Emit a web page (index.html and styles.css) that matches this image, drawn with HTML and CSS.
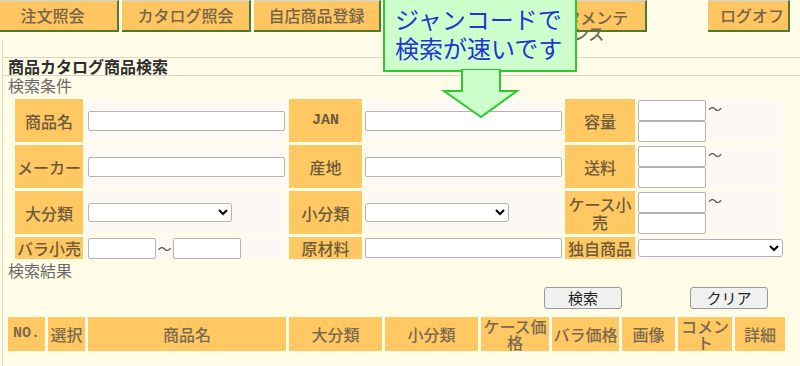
FILE: index.html
```html
<!doctype html>
<html>

<head>
    <meta charset="UTF-8">
    <title>商品カタログ商品検索</title>
    <link rel="stylesheet" href="styles.css">
</head>

<body>
<div class="nav">
    <a class="navBtn nb1">注文照会</a>
    <a class="navBtn nb2">カタログ照会</a>
    <a class="navBtn nb3">自店商品登録</a>
    <a class="navBtn nb4">データメンテナンス</a>
    <a class="navBtn nb5">ログオフ</a>
</div>

<div class="callout">ジャンコードで<br>検索が速いです</div>
<svg class="arrow" width="80" height="52" viewBox="0 0 80 52">
    <polygon points="22,0 60,0 60,22 77,22 41,48 4,22 22,22" fill="#ccffcc" stroke="#2ec92e" stroke-width="2" stroke-linejoin="miter"/>
</svg>

<div class="panel">
    <div class="title">商品カタログ商品検索</div>
    <div class="sub">検索条件</div>
    <table class="cond">
        <tr>
            <th class="c1">商品名</th>
            <td class="c2"><input class="txt wide"></td>
            <th class="c3 mono">JAN</th>
            <td class="c4"><input class="txt full"></td>
            <th class="c5">容量</th>
            <td class="c6 range">
                <div class="rangeBox">
                    <div class="stack"><input class="txt small"><input class="txt small"></div>
                    <span class="tilde">～</span>
                </div>
            </td>
        </tr>
        <tr>
            <th>メーカー</th>
            <td><input class="txt wide"></td>
            <th>産地</th>
            <td><input class="txt full"></td>
            <th>送料</th>
            <td class="range">
                <div class="rangeBox">
                    <div class="stack"><input class="txt small"><input class="txt small"></div>
                    <span class="tilde">～</span>
                </div>
            </td>
        </tr>
        <tr>
            <th>大分類</th>
            <td><select class="sel mid"></select></td>
            <th>小分類</th>
            <td><select class="sel mid2"></select></td>
            <th class="two">ケース小売</th>
            <td class="range">
                <div class="rangeBox">
                    <div class="stack"><input class="txt small"><input class="txt small"></div>
                    <span class="tilde">～</span>
                </div>
            </td>
        </tr>
        <tr class="short">
            <th>バラ小売</th>
            <td>
                <div class="between">
                    <input class="txt tiny"><span class="tilde2">～</span><input class="txt tiny">
                </div>
            </td>
            <th>原材料</th>
            <td><input class="txt full"></td>
            <th>独自商品</th>
            <td><select class="sel fullSel"></select></td>
        </tr>
    </table>

    <div class="sub2">検索結果</div>
    <div class="btnRow">
        <button class="btn">検索</button>
        <button class="btn">クリア</button>
    </div>

    <table class="result">
        <tr>
            <th class="r1 mono">NO.</th>
            <th class="r2">選択</th>
            <th class="r3">商品名</th>
            <th class="r4">大分類</th>
            <th class="r5">小分類</th>
            <th class="r6">ケース価格</th>
            <th class="r7">バラ価格</th>
            <th class="r8">画像</th>
            <th class="r9">コメント</th>
            <th class="r10">詳細</th>
        </tr>
    </table>
</div>
</body>

</html>
```

FILE: styles.css
```css
body {
    margin: 0;
    background-color: #fffde7;
    font-family: "Noto Sans CJK JP", sans-serif;
    font-size: 16px;
    color: #333;
}

.nav {
    display: flex;
    height: 32px;
}

.navBtn {
    box-sizing: border-box;
    height: 32px;
    background-color: #ffc561;
    border-top: 1px solid #bcdcf0;
    border-right: 2px solid #4e7a2e;
    border-bottom: 2px solid #4e7a2e;
    color: #75664a;
    font-weight: 500;
    text-align: center;
    line-height: 28px;
    white-space: nowrap;
}

.nb1 {
    width: 119px;
    padding-right: 12px;
}

.nb2 {
    width: 129px;
    margin-left: 3px;
}

.nb3 {
    width: 127px;
    margin-left: 3px;
}

.nb4 {
    width: 131px;
    margin-left: 135px;
    padding: 8px 12px 0;
    white-space: normal;
    line-height: 16px;
    overflow: visible;
}

.nb5 {
    width: 82px;
    margin-left: 61px;
    padding-left: 8px;
}

.callout {
    position: absolute;
    left: 383px;
    top: 0;
    box-sizing: border-box;
    width: 194px;
    height: 72px;
    padding: 4px 0 0 10px;
    background-color: #ccffcc;
    border: 2px solid #2ec92e;
    border-top: none;
    color: #1f35d6;
    font-size: 24px;
    line-height: 29px;
    z-index: 5;
}

.arrow {
    position: absolute;
    left: 440px;
    top: 69px;
    z-index: 6;
}

.panel {
    margin: 7px 0 0 2px;
    border-left: 1px solid #e2ddc8;
    padding: 18px 0 20px 5px;
}

.title {
    margin-left: -5px;
    padding-left: 5px;
    border-top: 1px solid #d9d6c6;
    border-bottom: 1px solid #d9d6c6;
    line-height: 17px;
    font-weight: bold;
    color: #2e2e2e;
}

.sub,
.sub2 {
    line-height: 18px;
    color: #6a6a6a;
}

.sub2 {
    line-height: 17px;
}

.cond {
    margin: 2px 0 0 4px;
    border-spacing: 3px;
}

.cond th,
.cond td {
    padding: 0;
    height: 43px;
}

.cond .short th,
.cond .short td {
    height: 22px;
}

.cond th {
    background-color: #ffc862;
    color: #6d5c3c;
    font-weight: 500;
    line-height: 18px;
    text-align: center;
}

.cond td {
    background-color: #fcf8f4;
    vertical-align: middle;
}

.c1 { width: 68px; }
.c2 { width: 200px; }
.c3 { width: 73px; }
.c4 { width: 197px; }
.c5 { width: 70px; }
.c6 { width: 145px; }

.cond th.mono,
.result th.mono {
    font-family: "Liberation Mono", monospace;
    font-size: 15px;
    font-weight: bold;
}

.txt {
    display: block;
    box-sizing: border-box;
    height: 20px;
    margin: 0;
    padding: 0 2px;
    border: 1px solid #b3b3b3;
    border-radius: 2px;
    background-color: #fff;
}

.wide {
    width: 197px;
    margin-left: 2px;
}

.full {
    width: 197px;
}

.small {
    width: 68px;
    height: 21px;
}

.tiny {
    width: 68px;
    height: 21px;
}

.range {
    vertical-align: top !important;
}

.rangeBox {
    display: flex;
    align-items: flex-start;
    padding-top: 1px;
}

.stack {
    display: flex;
    flex-direction: column;
}

.tilde {
    font-size: 14px;
    line-height: 16px;
    color: #555;
    margin-left: 2px;
}

.between {
    display: flex;
    align-items: center;
    margin-left: 2px;
}

.tilde2 {
    width: 17px;
    text-align: center;
    font-size: 14px;
    color: #555;
}

.sel {
    display: block;
    box-sizing: border-box;
    height: 19px;
    margin: 0;
    border: 1px solid #b3b3b3;
    border-radius: 3px;
    background-color: #fff;
    font-size: 12px;
}

.mid {
    width: 144px;
    margin-left: 2px;
}

.mid2 {
    width: 144px;
}

.fullSel {
    width: 145px;
    height: 18px;
}

.btnRow {
    display: flex;
    gap: 68px;
    margin: 8px 0 0 536px;
}

.btn {
    width: 78px;
    height: 22px;
    padding: 0;
    background-color: #f0f0f0;
    border: 1px solid #9a9a9a;
    border-radius: 3px;
    font-family: "Noto Sans CJK JP", sans-serif;
    font-size: 15px;
    line-height: 18px;
    color: #222;
}

.result {
    margin: 5px 0 0 -3px;
    border-spacing: 3px;
}

.result th {
    height: 34px;
    padding: 0;
    background-color: #ffc862;
    color: #7a6a50;
    font-weight: 500;
    line-height: 16px;
    text-align: center;
}

.r1 { width: 37px; }
.r2 { width: 37px; }
.r3 { width: 198px; }
.r4 { width: 93px; }
.r5 { width: 93px; }
.r6 { width: 68px; }
.r7 { width: 67px; }
.r8 { width: 53px; }
.r9 { width: 54px; }
.r10 { width: 50px; }
```
